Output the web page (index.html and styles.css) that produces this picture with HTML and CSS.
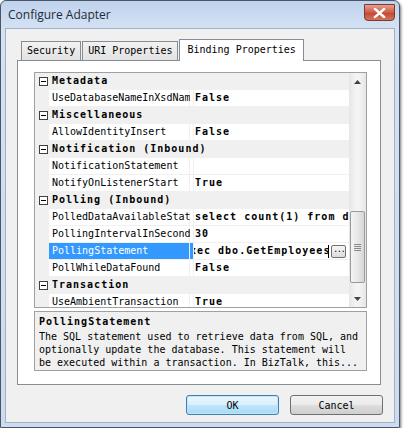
FILE: index.html
```html
<!DOCTYPE html>
<html lang="en">
<head>
    <meta charset="UTF-8">
    <title>Configure Adapter</title>
    <link rel="stylesheet" href="styles.css">
</head>
<body>
    <div class="window">
        <div class="titlebar">
            <span class="title">Configure Adapter</span>
            <div class="close-btn">
                <svg width="13" height="10" viewBox="0 0 13 10">
                    <path d="M2 1 L11 9 M11 1 L2 9" stroke="#fff" stroke-width="2.4" stroke-linecap="square"/>
                </svg>
            </div>
        </div>
        <div class="client">
            <div class="tabs">
                <div class="tab">Security</div>
                <div class="tab">URI Properties</div>
                <div class="tab selected">Binding Properties</div>
            </div>
            <div class="panel">
                <div class="grid">
                    <div class="rows-box">
                        <div class="rows">
                            <div class="row category"><span class="margin"><span class="minus"></span></span><span class="cat-name">Metadata</span></div>
                            <div class="row"><span class="margin"></span><span class="name">UseDatabaseNameInXsdName</span><span class="value">False</span></div>
                            <div class="row category"><span class="margin"><span class="minus"></span></span><span class="cat-name">Miscellaneous</span></div>
                            <div class="row"><span class="margin"></span><span class="name">AllowIdentityInsert</span><span class="value">False</span></div>
                            <div class="row category"><span class="margin"><span class="minus"></span></span><span class="cat-name">Notification (Inbound)</span></div>
                            <div class="row"><span class="margin"></span><span class="name">NotificationStatement</span><span class="value"></span></div>
                            <div class="row"><span class="margin"></span><span class="name">NotifyOnListenerStart</span><span class="value">True</span></div>
                            <div class="row category"><span class="margin"><span class="minus"></span></span><span class="cat-name">Polling (Inbound)</span></div>
                            <div class="row"><span class="margin"></span><span class="name">PolledDataAvailableStatement</span><span class="value">select count(1) from dbo.Employees</span></div>
                            <div class="row"><span class="margin"></span><span class="name">PollingIntervalInSeconds</span><span class="value">30</span></div>
                            <div class="row"><span class="margin"></span><span class="name active">PollingStatement</span><span class="value editing"><span class="edit-text">xec dbo.GetEmployees</span><span class="caret"></span><span class="dots-btn">...</span></span></div>
                            <div class="row"><span class="margin"></span><span class="name">PollWhileDataFound</span><span class="value">False</span></div>
                            <div class="row category"><span class="margin"><span class="minus"></span></span><span class="cat-name">Transaction</span></div>
                            <div class="row"><span class="margin"></span><span class="name">UseAmbientTransaction</span><span class="value">True</span></div>
                        </div>
                        <div class="scrollbar">
                            <div class="arrow">
                                <svg width="7" height="4" viewBox="0 0 7 4"><path d="M3.5 0 L7 4 L0 4 Z" fill="#444"/></svg>
                            </div>
                            <div class="track-top"></div>
                            <div class="thumb">
                                <span class="grip"></span><span class="grip"></span><span class="grip"></span><span class="grip"></span>
                            </div>
                            <div class="track-bottom"></div>
                            <div class="arrow">
                                <svg width="7" height="4" viewBox="0 0 7 4"><path d="M0 0 L7 0 L3.5 4 Z" fill="#444"/></svg>
                            </div>
                        </div>
                    </div>
                    <div class="desc">
                        <div class="desc-title">PollingStatement</div>
                        <p class="desc-text">The SQL statement used to retrieve data from SQL, and<br>optionally update the database. This statement will<br>be executed within a transaction. In BizTalk, this...</p>
                    </div>
                </div>
            </div>
            <div class="buttons">
                <button class="btn default">OK</button>
                <button class="btn">Cancel</button>
            </div>
        </div>
    </div>
</body>
</html>
```

FILE: styles.css
```css
/* Reset */
* {
    margin: 0;
    padding: 0;
    box-sizing: border-box;
}

body {
    background: #ffffff;
    font-family: 'DejaVu Sans Mono', 'Liberation Mono', monospace;
    font-size: 10px;
    color: #000;
}

/* Window frame */
.window {
    width: 400px;
    height: 428px;
    border: 1px solid #4a5566;
    border-radius: 6px 6px 0 0;
    background: linear-gradient(#bfd2ec, #d3e1f3 26px, #cddbee);
    padding: 0 4px 4px 4px;
    display: flex;
    flex-direction: column;
    box-shadow: 1px 2px 3px rgba(0, 0, 0, 0.55);
}

.titlebar {
    height: 27px;
    display: flex;
    justify-content: space-between;
    align-items: flex-start;
}

.title {
    font-family: 'Open Sans', 'Liberation Sans', sans-serif;
    font-size: 12px;
    color: #1e2a3a;
    margin: 5px 0 0 3px;
}

.close-btn {
    width: 31px;
    height: 17px;
    margin-top: 3px;
    border: 1px solid #7a3a32;
    border-radius: 0 0 4px 4px;
    background: linear-gradient(#e7a08f, #cf5a45 50%, #c24531 51%, #d4745e);
    display: flex;
    align-items: center;
    justify-content: center;
}

.client {
    flex: 1;
    background: #f0f0f0;
    border: 1px solid #9fb1c8;
    padding: 10px 11px 0 11px;
    display: flex;
    flex-direction: column;
}

/* Tabs */
.tabs {
    display: flex;
    align-items: flex-end;
    height: 21px;
    margin-left: 4px;
    position: relative;
    z-index: 1;
}

.tab {
    height: 19px;
    padding: 0 5px;
    border: 1px solid #898c95;
    border-bottom: none;
    background: linear-gradient(#f2f2f2, #e2e2e2);
    line-height: 18px;
}

.tab + .tab {
    margin-left: 1px;
}

.tab.selected {
    height: 22px;
    padding: 0 7px;
    margin-bottom: -1px;
    background: #ffffff;
    line-height: 20px;
}

.panel {
    width: 364px;
    height: 325px;
    border: 1px solid #898c95;
    background: #ffffff;
    padding: 11px 13px 13px 16px;
}

/* Property grid */
.grid {
    height: 100%;
    display: flex;
    flex-direction: column;
    gap: 3px;
}

.rows-box {
    height: 236px;
    border: 1px solid #a0a0a0;
    display: flex;
    overflow: hidden;
}

.rows {
    flex: 1;
    overflow: hidden;
}

.row {
    height: 17px;
    display: flex;
    border-bottom: 1px solid #f0f0f0;
    background: #fff;
    white-space: nowrap;
}

.margin {
    width: 14px;
    flex-shrink: 0;
    background: #f0f0f0;
    display: flex;
    align-items: center;
    justify-content: center;
}

.category {
    background: #f0f0f0;
}

.minus {
    width: 9px;
    height: 9px;
    border: 1px solid #404040;
    background: #fff;
    position: relative;
    margin-left: 3px;
}

.minus::after {
    content: "";
    position: absolute;
    left: 1px;
    top: 3px;
    width: 5px;
    height: 1px;
    background: #000;
}

.cat-name {
    font-weight: bold;
    letter-spacing: 1px;
    padding-left: 3px;
    line-height: 16px;
}

.name {
    width: 144px;
    flex-shrink: 0;
    padding-left: 3px;
    line-height: 16px;
    overflow: hidden;
    border-right: 3px solid #fff;
    box-shadow: inset -1px 0 0 #f0f0f0;
}

.name.active {
    background: #3399ff;
    color: #fff;
    border-right-color: #3399ff;
}

.value {
    flex: 1;
    padding-left: 1px;
    font-weight: bold;
    letter-spacing: 1px;
    line-height: 16px;
    overflow: hidden;
    min-width: 0;
    border-left: 1px solid #f0f0f0;
}

.value.editing {
    display: flex;
    align-items: center;
    padding-left: 0;
}

.edit-text {
    margin-left: -4px;
}

.caret {
    width: 1px;
    height: 13px;
    background: #000;
    margin-left: -2px;
}

.dots-btn {
    width: 15px;
    height: 13px;
    margin-left: 2px;
    border: 1px solid #707070;
    border-radius: 2px;
    background: linear-gradient(#f6f6f6, #dcdcdc);
    font-weight: normal;
    font-size: 8px;
    line-height: 8px;
    letter-spacing: -1px;
    text-align: center;
}

/* Scrollbar */
.scrollbar {
    width: 17px;
    flex-shrink: 0;
    display: flex;
    flex-direction: column;
    background: linear-gradient(90deg, #e6e6e6, #f4f4f4 40%, #f4f4f4 60%, #e6e6e6);
}

.arrow {
    height: 17px;
    display: flex;
    align-items: center;
    justify-content: center;
}

.track-top {
    height: 121px;
}

.thumb {
    height: 72px;
    margin: 0 1px;
    border: 1px solid #9a9a9a;
    border-radius: 2px;
    background: linear-gradient(90deg, #f4f4f4, #e8e8e8 50%, #d6d6d6);
    display: flex;
    flex-direction: column;
    align-items: center;
    justify-content: center;
    gap: 1px;
}

.grip {
    width: 7px;
    height: 1px;
    background: #8a8a8a;
}

.track-bottom {
    flex: 1;
}

/* Description pane */
.desc {
    flex: 1;
    border: 1px solid #a0a0a0;
    background: #f0f0f0;
    padding: 2px 4px;
    overflow: hidden;
}

.desc-title {
    font-weight: bold;
    letter-spacing: 1px;
    line-height: 15px;
    margin-bottom: 1px;
}

.desc-text {
    line-height: 13px;
    white-space: nowrap;
}

/* Buttons */
.buttons {
    display: flex;
    justify-content: flex-end;
    gap: 11px;
    margin-top: 10px;
}

.btn {
    width: 93px;
    height: 20px;
    border: 1px solid #707070;
    border-radius: 3px;
    background: linear-gradient(#f2f2f2, #ebebeb 50%, #dddddd 51%, #cfcfcf);
    font-family: 'DejaVu Sans Mono', 'Liberation Mono', monospace;
    font-size: 10px;
    color: #000;
}

.btn.default {
    border-color: #3c7fb1;
    background: linear-gradient(#eaf6fd, #d9f0fc 50%, #bee6fd 51%, #a7d9f5);
    box-shadow: inset 0 0 0 1px #c6e4f7;
}
```
